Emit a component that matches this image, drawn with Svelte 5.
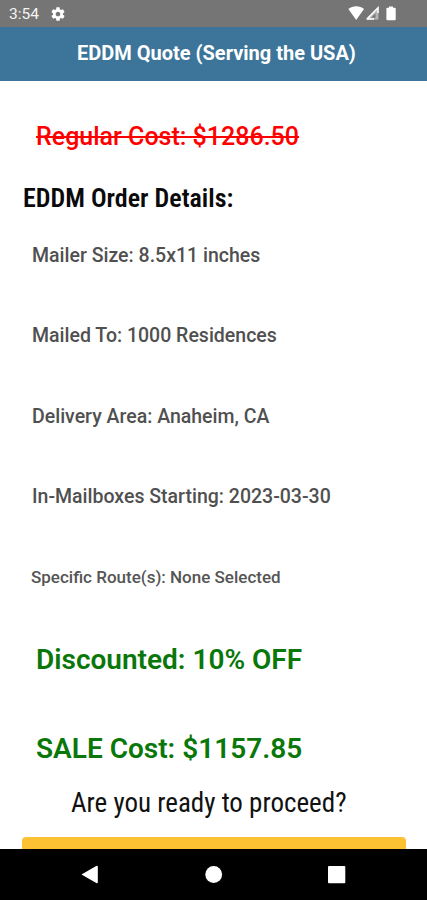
<script>
  const details = [
    'Mailer Size: 8.5x11 inches',
    'Mailed To: 1000 Residences',
    'Delivery Area: Anaheim, CA',
    'In-Mailboxes Starting: 2023-03-30'
  ];
</script>

<div class="screen">
  <div class="status">
    <span class="time">3:54</span>
    <svg class="gear" width="16" height="16" viewBox="0 0 24 24" fill="#fff"><path d="M19.43 12.98c.04-.32.07-.64.07-.98s-.03-.66-.07-.98l2.11-1.65c.19-.15.24-.42.12-.64l-2-3.46c-.12-.22-.39-.3-.61-.22l-2.49 1c-.52-.4-1.08-.73-1.69-.98l-.38-2.65C14.46 2.18 14.25 2 14 2h-4c-.25 0-.46.18-.49.42l-.38 2.65c-.61.25-1.17.59-1.69.98l-2.49-1c-.23-.09-.49 0-.61.22l-2 3.46c-.13.22-.07.49.12.64l2.11 1.65c-.04.32-.07.65-.07.98s.03.66.07.98l-2.11 1.65c-.19.15-.24.42-.12.64l2 3.46c.12.22.39.3.61.22l2.49-1c.52.4 1.08.73 1.69.98l.38 2.65c.03.24.24.42.49.42h4c.25 0 .46-.18.49-.42l.38-2.65c.61-.25 1.17-.59 1.69-.98l2.49 1c.23.09.49 0 .61-.22l2-3.46c.12-.22.07-.49-.12-.64l-2.11-1.65zM12 15.5c-1.93 0-3.5-1.57-3.5-3.5s1.57-3.5 3.5-3.5 3.5 1.57 3.5 3.5-1.57 3.5-3.5 3.5z"/></svg>
    <svg class="signals" width="50" height="16" viewBox="0 0 50 16">
      <path d="M.4 3.1C4.7-.7 11.7-.7 16 3.1L8.2 14z" fill="#fff"/>
      <path d="M18.4 13.4L30.4 1.4V13.4z" fill="#b5b5b5"/>
      <path d="M18.9 13.1L30 1.8V7M18.6 13.1H26" fill="none" stroke="#fff" stroke-width="1.5"/>
      <path d="M23.3 11.7L27.5 7.5V11.7z" fill="#757575"/>
      <path d="M41 .5h4v1.3h1.7q1 0 1 1v10.4q0 1-1 1h-7.3q-1 0-1-1V2.8q0-1 1-1H41z" fill="#fff"/>
    </svg>
  </div>
  <header><span>EDDM Quote (Serving the USA)</span></header>
  <main>
    <div class="regular"><span>Regular Cost: $1286.50</span></div>
    <h2><span>EDDM Order Details:</span></h2>
    {#each details as line, i}
      <div class="detail d{i}"><span>{line}</span></div>
    {/each}
    <div class="route"><span>Specific Route(s): None Selected</span></div>
    <div class="sale discount"><span>Discounted: 10% OFF</span></div>
    <div class="sale total"><span>SALE Cost: $1157.85</span></div>
    <div class="ready"><span>Are you ready to proceed?</span></div>
    <button aria-label="Proceed"></button>
  </main>
  <nav>
    <svg width="427" height="51" viewBox="0 0 427 51" fill="#fff">
      <path d="M81.5 25.4L96.2 17q1.6-.7 1.6 1v15.2q0 1.500-1.500.8z"/>
      <circle cx="213.700" cy="25.500" r="8.400"/>
      <rect x="328" y="17" width="17.300" height="17.300" rx="1"/>
    </svg>
  </nav>
</div>

<style>
  .screen {
    width: 427px;
    height: 900px;
    display: flex;
    flex-direction: column;
    background: #fff;
    font-family: Roboto, "Liberation Sans", sans-serif;
    overflow: hidden;
    white-space: nowrap;
  }
  span { display: inline-block; transform-origin: 0 50%; }
  .status {
    height: 27px;
    flex: none;
    background: #757575;
    display: flex;
    align-items: center;
    padding: 0 29px 0 9px;
    box-sizing: border-box;
    color: #f4f4f4;
  }
  .time { font-size: 15.500px; line-height: 27px; padding-top: 1px; }
  .gear { margin-left: 11px; }
  .signals { margin-left: auto; }
  header {
    height: 54px;
    flex: none;
    background: #3c7599;
    color: #fff;
    font-size: 20px;
    font-weight: 700;
    line-height: 53px;
    padding-left: 77px;
  }
  main { flex: 1; min-height: 0; overflow: hidden; }
  main > div, h2 { line-height: 40px; height: 40px; }
  .regular { margin-top: 36px; padding-left: 36px; color: #f00; font-size: 25px; font-weight: 500; }
  .regular span { text-decoration: line-through; text-decoration-thickness: 2px; }
  h2 { margin: 21px 0 0; padding-left: 23px; font-size: 26px; font-weight: 600; color: #0a0a0a; font-stretch: condensed; }
  .detail { margin-top: 40.300px; padding-left: 32px; color: #505050; font-size: 19.500px; font-weight: 500; }
  .detail.d0 { margin-top: 18px; }
  .route { margin-top: 40px; padding-left: 31px; color: #555; font-size: 17px; font-weight: 500; }
  .sale { padding-left: 36px; color: #0a770a; font-size: 28px; font-weight: 600; }
  .discount { margin-top: 43px; }
  .total { margin-top: 49px; }
  .ready { margin-top: 14px; padding-left: 71px; font-size: 27px; color: #111; font-stretch: condensed; }
  button {
    display: block;
    width: 384px;
    height: 40px;
    margin: 14px 0 0 22px;
    padding: 0;
    border: 0;
    border-radius: 4px;
    background: #fdc134;
  }
  nav { height: 51px; flex: none; background: #000; }
  nav svg { display: block; }
</style>
